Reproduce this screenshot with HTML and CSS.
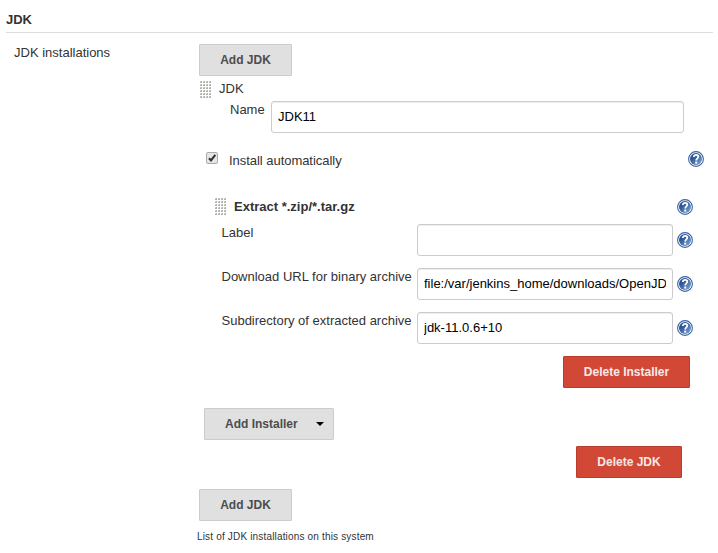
FILE: index.html
```html
<!DOCTYPE html>
<html lang="en">
<head>
<meta charset="utf-8">
<title>JDK</title>
<link rel="stylesheet" href="styles.css">
</head>
<body>
<svg class="defs" width="0" height="0" aria-hidden="true">
  <defs>
    <linearGradient id="blue" x1="0" y1="0" x2="1" y2="1"><stop offset="0.3" stop-color="#2a5596"/><stop offset="1" stop-color="#86a9d4"/></linearGradient>
    <symbol id="help" viewBox="0 0 16 16">
      <circle cx="8" cy="8" r="7.4" fill="#fff" stroke="#3a62a0" stroke-width="1.1"/>
      <circle cx="8" cy="8" r="6" fill="url(#blue)"/>
      <path d="M5.8 5.9C5.8 3.2 10.3 3.3 10.3 5.8C10.3 7.4 8.2 7.3 8.2 9.6" fill="none" stroke="#fff" stroke-width="1.8"/>
      <rect x="7.2" y="10.6" width="2" height="2" fill="#fff"/>
    </symbol>
    <pattern id="dots" width="3" height="3" patternUnits="userSpaceOnUse">
      <path d="M0 0h2v2h-2z" fill="#d3d1ce"/><path d="M1 0h1v2h-2v-1h1z" fill="#b5b2ae"/>
    </pattern>
    <symbol id="grip" viewBox="0 0 12 18"><rect width="12" height="18" fill="url(#dots)"/></symbol>
  </defs>
</svg>
<h1 class="section-title">JDK</h1>
<main class="setting">
  <div class="setting-name">JDK installations</div>
  <div class="setting-main">
    <button class="button add">Add JDK</button>
    <div class="drag-title"><svg class="grip"><use href="#grip"/></svg><span>JDK</span></div>
    <div class="name-row"><label for="name">Name</label><input id="name" class="field" value="JDK11"></div>
    <div class="auto-row">
      <svg class="check" viewBox="0 0 12 12"><rect x=".5" y=".5" width="11" height="11" rx="1.5" fill="#e6e6e6" stroke="#aaa"/><path d="M3 6.2L5 8.4L9.3 2.9" fill="none" stroke="#333" stroke-width="2.1"/></svg>
      <span class="auto-label">Install automatically</span>
      <svg class="help"><use href="#help"/></svg>
    </div>
    <section class="installer">
      <div class="installer-title"><svg class="grip"><use href="#grip"/></svg><strong>Extract *.zip/*.tar.gz</strong><svg class="help"><use href="#help"/></svg></div>
      <div class="field-row"><label for="label">Label</label><input id="label" class="field"><svg class="help"><use href="#help"/></svg></div>
      <div class="field-row"><label for="url">Download URL for binary archive</label><input id="url" class="field" value="file:/var/jenkins_home/downloads/OpenJD"><svg class="help"><use href="#help"/></svg></div>
      <div class="field-row"><label for="sub">Subdirectory of extracted archive</label><input id="sub" class="field" value="jdk-11.0.6+10"><svg class="help"><use href="#help"/></svg></div>
      <button class="button danger delete-installer">Delete Installer</button>
    </section>
    <button class="button add-installer"><span>Add Installer</span><svg class="caret" viewBox="0 0 8 4"><path d="M0 0h8L4 4z"/></svg></button>
    <button class="button danger delete-jdk">Delete JDK</button>
    <button class="button add">Add JDK</button>
    <p class="description">List of JDK installations on this system</p>
  </div>
</main>
</body>
</html>
```
FILE: styles.css
```css
* { box-sizing: border-box; }
body {
  margin: 0;
  background: #fff;
  color: #333;
  font: 13px/16px "Liberation Sans", Arial, sans-serif;
}
svg { display: block; flex: none; }
.defs { position: absolute; }
.section-title {
  height: 33px;
  margin: 0 5px 0 6px;
  padding-top: 12px;
  border-bottom: 1px solid #ddd;
  font-size: 13px;
  line-height: 16px;
}
.setting { display: flex; padding-top: 11px; }
.setting-name { width: 199px; padding: 1px 0 0 14px; }
.setting-main { display: flex; flex: 1; flex-direction: column; align-items: flex-start; }
.button {
  height: 32px;
  padding: 0;
  border: 1px solid #ccc;
  border-radius: 1px;
  background: #e0e0e0;
  color: #4d4d4d;
  font: bold 12px/30px "Liberation Sans", Arial, sans-serif;
}
.add { width: 93px; }
.danger { border-color: #b93d2f; background: #d14836; color: #f8e8e6; }
.drag-title { display: flex; height: 25px; padding: 5px 0 0 1px; }
.drag-title span { margin-left: 7px; }
.grip { width: 12px; height: 18px; }
.name-row { display: flex; padding-left: 31px; }
.name-row label { width: 41px; padding-top: 1px; }
.field {
  height: 32px;
  min-width: 0;
  margin: 0;
  padding: 0 6px 1px;
  border: 1px solid #ccc;
  border-radius: 3px;
  background: #fff;
  box-shadow: inset 0 1px 1px rgba(0, 0, 0, .075);
  color: #000;
  font: 13px "Liberation Sans", Arial, sans-serif;
}
.name-row .field { width: 413px; }
.auto-row { display: flex; align-items: center; width: 505px; height: 16px; margin-top: 18px; padding-left: 7px; }
.check { width: 12px; height: 12px; margin-top: -2px; }
.auto-label { margin: 4px 0 0 11px; letter-spacing: -.04px; }
.help { width: 16px; height: 16px; margin-left: auto; }
.installer { display: flex; flex-direction: column; width: 472px; margin: 31px 0 0 22px; }
.installer-title { display: flex; height: 26px; margin-left: -6px; }
.installer-title .help { margin-top: 1px; }
.installer-title strong { margin-left: 7px; padding-top: 1px; }
.field-row { display: flex; height: 44px; }
.field-row label { width: 196px; padding: 1px 0 0 .5px; white-space: nowrap; }
.field-row .field { width: 256px; }
.field-row .help { margin-top: 8px; }
.delete-installer { align-self: flex-end; width: 127px; margin-right: 3px; }
.add-installer { display: flex; align-items: center; justify-content: space-between; width: 130px; margin: 20px 0 0 5px; padding: 0 9px 0 20px; }
.caret { width: 8px; height: 4px; fill: #000; }
.delete-jdk { width: 106px; margin: 6px 0 11px 377px; }
.description { margin: 8px 0 0 -2px; font-size: 10px; letter-spacing: .17px; }
```
